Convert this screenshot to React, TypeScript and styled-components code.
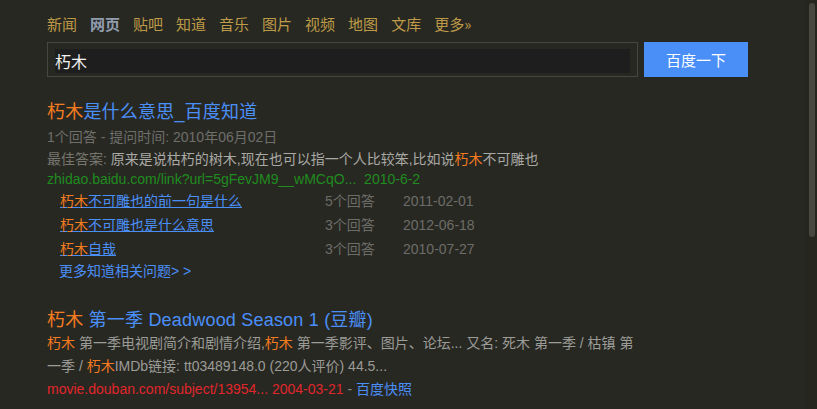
import React from 'react'
import styled, {createGlobalStyle} from "styled-components";

const GlobalStyle = createGlobalStyle`
html, body {
  background: #282822;
}
html::-webkit-scrollbar {
  display: none;
}
body {
  margin: 0;
  font-family: "Liberation Sans", Arial, "Noto Sans CJK SC", sans-serif;
}
`;

const nav = ['新闻', '网页', '贴吧', '知道', '音乐', '图片', '视频', '地图', '文库', '更多»']

const related = [
  {rest: '不可雕也的前一句是什么', count: '5个回答', date: '2011-02-01'},
  {rest: '不可雕也是什么意思', count: '3个回答', date: '2012-06-18'},
  {rest: '自哉', count: '3个回答', date: '2010-07-27'},
]

export default function App() {
  return (
    <Page>
      <GlobalStyle />
      <ScrollTrack>
        <ScrollThumb />
      </ScrollTrack>

      <NavBar>
        {nav.map(n => (
          <NavItem key={n} active={n === '网页'}>{n}</NavItem>
        ))}
      </NavBar>

      <SearchForm>
        <InputBox>
          <Input defaultValue="朽木" />
        </InputBox>
        <SearchButton>百度一下</SearchButton>
      </SearchForm>

      <Result>
        <Title><Hl>朽木</Hl>是什么意思_百度知道</Title>
        <Meta>1个回答 - 提问时间: 2010年06月02日</Meta>
        <Answer>
          <Label>最佳答案: </Label>原来是说枯朽的树木,现在也可以指一个人比较笨,比如说<Hl>朽木</Hl>不可雕也
        </Answer>
        <GreenUrl>zhidao.baidu.com/link?url=5gFevJM9__wMCqO...&nbsp; 2010-6-2</GreenUrl>
        <RelatedList>
          {related.map(r => (
            <RelatedRow key={r.rest}>
              <RelatedLink><Hl>朽木</Hl>{r.rest}</RelatedLink>
              <Muted>{r.count}</Muted>
              <Muted>{r.date}</Muted>
            </RelatedRow>
          ))}
        </RelatedList>
        <MoreLink>更多知道相关问题&gt; &gt;</MoreLink>
      </Result>

      <Result second>
        <Title><Hl>朽木</Hl> 第一季 Deadwood Season 1 (豆瓣)</Title>
        <Desc>
          <Hl>朽木</Hl> 第一季电视剧简介和剧情介绍,<Hl>朽木</Hl> 第一季影评、图片、论坛... 又名: 死木 第一季 / 枯镇 第一季 / <Hl>朽木</Hl>IMDb链接: tt03489148.0 (220人评价) 44.5...
        </Desc>
        <RedUrl>
          movie.douban.com/subject/13954... 2004-03-21 <Dash>-</Dash> <Snapshot>百度快照</Snapshot>
        </RedUrl>
      </Result>
    </Page>
  )
}

const Page = styled.div`
  box-sizing: border-box;
  height: 715px;
  padding: 14px 0 0 47px;
`;

/* browser scrollbar look, drawn over the page edge */
const ScrollTrack = styled.div`
  position: fixed;
  top: 0;
  right: 0;
  width: 10px;
  height: 100%;
  background: #26261f;
  border-left: 1px solid #22221c;
`;

const ScrollThumb = styled.div`
  margin: 3px 2px 0 2px;
  height: 234px;
  border-radius: 3px;
  background: #48483f;
`;

const NavBar = styled.div`
  display: flex;
  gap: 13px;
  height: 20px;
  line-height: 20px;
`;

const NavItem = styled.span<{active?: boolean}>`
  font-size: 15px;
  font-family: "Noto Sans CJK SC", sans-serif;
  color: ${p => p.active ? '#909db0' : '#bd9a47'};
  font-weight: ${p => p.active ? 'bold' : 'normal'};
`;

const SearchForm = styled.div`
  display: flex;
  margin-top: 8px;
  height: 35px;
`;

const InputBox = styled.div`
  box-sizing: border-box;
  width: 591px;
  height: 35px;
  border: 1px solid #47473f;
  padding: 6px 7px;
`;

const Input = styled.input`
  box-sizing: border-box;
  width: 100%;
  height: 24px;
  border: none;
  outline: none;
  background: #1e1e1e;
  color: #f2f2f2;
  font-size: 16px;
  font-family: "Noto Sans CJK SC", sans-serif;
  padding: 0;
`;

const SearchButton = styled.button`
  width: 104px;
  height: 35px;
  margin-left: 6px;
  border: none;
  background: #4a8ff8;
  color: #fff;
  font-size: 15px;
  font-family: "Noto Sans CJK SC", sans-serif;
  padding: 0;
`;

const Result = styled.div<{second?: boolean}>`
  margin-top: ${p => p.second ? '27px' : '23px'};
  font-size: 14px;
`;

const Title = styled.div`
  font-size: 18px;
  line-height: 24px;
  color: #4a8ff8;
  letter-spacing: 0.2px;
`;

const Hl = styled.span`
  color: #f47b20;
`;

const Meta = styled.div`
  margin-top: 2px;
  line-height: 22px;
  color: #6e6e6b;
`;

const Answer = styled.div`
  line-height: 22px;
  color: #a9a9a5;
`;

const Label = styled.span`
  color: #76766f;
`;

const GreenUrl = styled.div`
  line-height: 19px;
  color: #1f8c1f;
`;

const RelatedList = styled.div`
  padding-left: 13px;
`;

const RelatedRow = styled.div`
  display: grid;
  grid-template-columns: 265px 78px auto;
  line-height: 24px;
`;

const RelatedLink = styled.a`
  color: #4a8ff8;
  text-decoration: underline;
  justify-self: start;
`;

const Muted = styled.span`
  color: #6c6c68;
`;

const MoreLink = styled.div`
  padding-left: 12px;
  line-height: 20px;
  color: #4a8ff8;
`;

const Desc = styled.div`
  width: 592px;
  line-height: 23px;
  color: #9b9b97;
`;

const RedUrl = styled.div`
  line-height: 23px;
  color: #e0262b;
`;

const Dash = styled.span`
  color: #8a8a85;
`;

const Snapshot = styled.span`
  color: #4a8ff8;
`;
